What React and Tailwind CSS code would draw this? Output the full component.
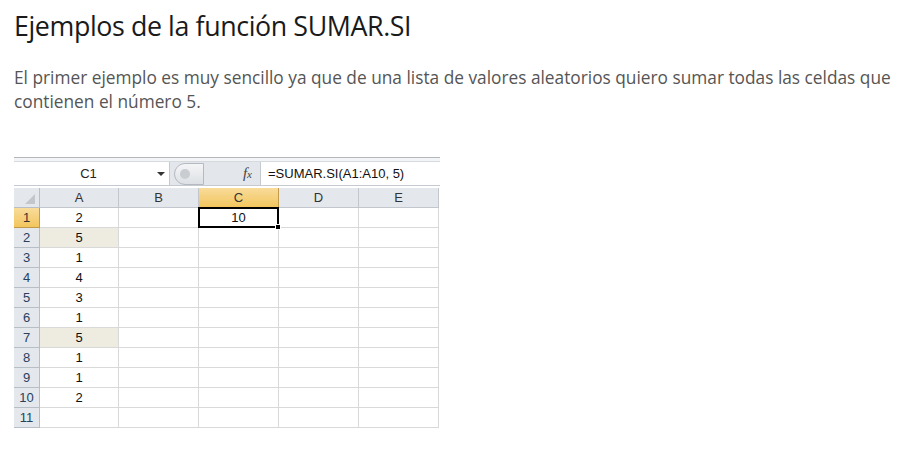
import React from "react";

const cols = ["A", "B", "C", "D", "E"];
const values = [2, 5, 1, 4, 3, 1, 5, 1, 1, 2, null];

const hdr = "flex items-center justify-center bg-[#e4e7eb] border-r border-b border-[#c2c7cd] text-[#333]";
const hdrSel = "flex items-center justify-center bg-gradient-to-b from-[#f9dc9a] to-[#f2c55c] border-r border-b border-[#c29b4a] text-[#333]";
const cell = "flex items-center justify-center bg-white border-r border-b border-[#d9d9d9] text-[#111]";
const cellHi = "flex items-center justify-center bg-[#eeece1] border-r border-b border-[#d9d9d9] text-[#111]";

export default function App() {
  return (
    <div className="w-[898px] h-[451px] bg-white overflow-hidden" style={{ fontFamily: '"Open Sans", sans-serif' }}>
      <h1 className="pl-[14px] pt-[9px] text-[26.8px] leading-[34px] text-[#1a1a1a] tracking-[-0.4px]">
        Ejemplos de la función SUMAR.SI
      </h1>
      <p className="pl-[14px] mt-[23px] text-[17.3px] leading-[24px] text-[#555]">
        El primer ejemplo es muy sencillo ya que de una lista de valores aleatorios quiero sumar todas las celdas que contienen el número 5.
      </p>

      <div className="ml-[14px] mt-[43px] w-[426px]" style={{ fontFamily: '"Liberation Sans", Arial, sans-serif' }}>
        {/* ribbon edge */}
        <div className="h-[5px] border-t border-[#b4b8bd] border-b border-b-[#d6d9dd] bg-[#f3f4f6]" />
        {/* formula bar */}
        <div className="flex h-[24px] bg-[#e3e6ea] border-b border-[#c5cad0]">
          <div className="w-[156px] bg-white border-r border-[#c5cad0] flex items-center text-[13px] text-[#222]">
            <span className="flex-1 text-center pl-[6px]">C1</span>
            <span className="mr-[4px] w-0 h-0 border-l-[4px] border-r-[4px] border-t-[4px] border-l-transparent border-r-transparent border-t-[#333]" />
          </div>
          <div className="w-[90px] flex items-center pl-[4px]">
            <div className="w-[30px] h-[22px] rounded-l-full border border-[#b5bac1] bg-gradient-to-b from-[#f4f5f7] to-[#dde0e4] flex items-center pl-[5px]">
              <div className="w-[10px] h-[10px] rounded-full bg-[#c9cdd2]" />
            </div>
            <span className="ml-auto mr-[8px] text-[15px] italic text-[#444]" style={{ fontFamily: '"Liberation Serif", serif' }}>
              f<span className="text-[11px]">x</span>
            </span>
          </div>
          <div className="flex-1 bg-white border-l border-[#c5cad0] flex items-center pl-[7px] text-[13px] text-[#111]">
            =SUMAR.SI(A1:A10, 5)
          </div>
        </div>

        {/* grid */}
        <div className="mt-[2px] grid grid-cols-[26px_79px_80px_80px_80px_80px] auto-rows-[20px] text-[13px]">
          <div className="flex items-end justify-end pr-[4px] pb-[3px] bg-[#e4e7eb] border-r border-b border-[#b8bec6]">
            <span className="w-0 h-0 border-l-[10px] border-b-[10px] border-l-transparent border-b-[#c3c7cc]" />
          </div>
          {cols.map((c) => (
            <div key={c} className={c === "C" ? hdrSel : hdr}>
              {c}
            </div>
          ))}
          {values.map((v, i) => (
            <React.Fragment key={i}>
              <div className={i === 0 ? hdrSel : "flex items-center justify-center bg-[#e4e7eb] border-r border-b border-[#b8bec6] text-[#27415e]"}>
                {i + 1}
              </div>
              <div className={v === 5 ? cellHi : cell}>{v}</div>
              <div className={cell} />
              {i === 0 ? (
                <div className="relative flex items-center justify-center border-2 border-black -ml-[1px] -mt-[1px] text-[#111]">
                  10
                  <span className="absolute -right-[4px] -bottom-[4px] w-[6px] h-[6px] bg-black border border-white" />
                </div>
              ) : (
                <div className={cell} />
              )}
              <div className={cell} />
              <div className={cell} />
            </React.Fragment>
          ))}
        </div>
      </div>
    </div>
  );
}
